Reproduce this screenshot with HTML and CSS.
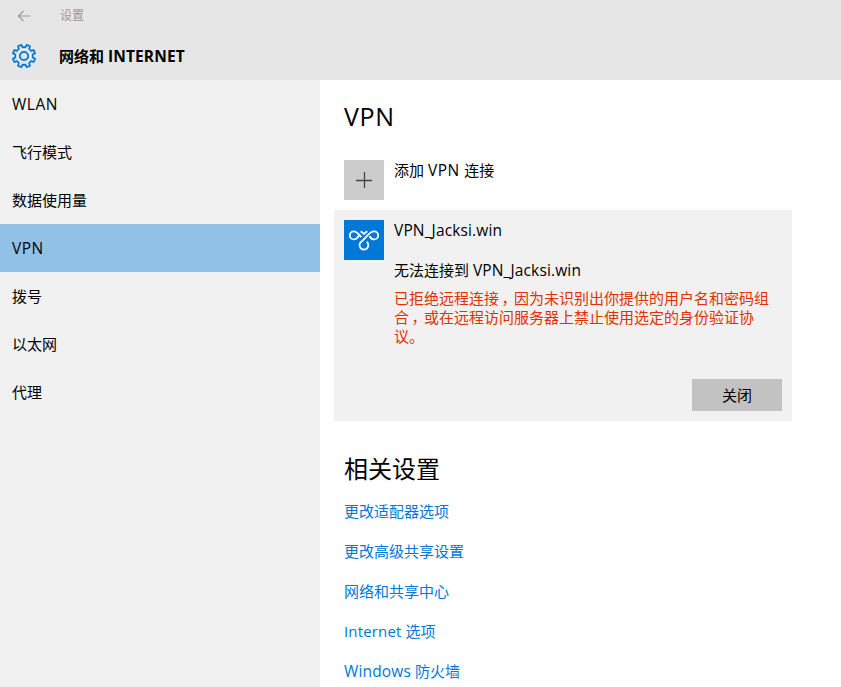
FILE: index.html
```html
<!DOCTYPE html>
<html lang="zh-CN">
<head>
<meta charset="utf-8">
<title>设置</title>
<link rel="stylesheet" href="styles.css">
</head>
<body>
<header class="header">
  <div class="titlebar">
    <svg class="back" viewBox="0 0 14 12" width="14" height="12"><path d="M13 6H1.5M6.5 1L1.5 6l5 5"/></svg>
    <span>设置</span>
  </div>
  <div class="heading">
    <svg class="gear" viewBox="-12 -12 24 24" width="24" height="24">
      <path d="M8.68 1.45L11.09 2.66L9.72 5.96L7.16 5.11Q6.3 6.3 5.11 7.16L5.96 9.72L2.66 11.09L1.45 8.68Q0 8.9-1.45 8.68L-2.66 11.09L-5.96 9.72L-5.11 7.16Q-6.3 6.3-7.16 5.11L-9.72 5.96L-11.09 2.66L-8.68 1.45Q-8.9 0-8.68-1.45L-11.09-2.66L-9.72-5.96L-7.16-5.11Q-6.3-6.3-5.11-7.16L-5.96-9.72L-2.66-11.09L-1.45-8.68Q0-8.9 1.45-8.68L2.66-11.09L5.96-9.72L5.11-7.16Q6.3-6.3 7.16-5.11L9.72-5.96L11.09-2.66L8.68-1.45Q8.9 0 8.68 1.45Z"/>
      <circle r="4.2"/>
    </svg>
    <h1>网络和 <span class="en">INTERNET</span></h1>
  </div>
</header>
<div class="body">
  <nav class="nav">
    <a class="caps">WLAN</a>
    <a>飞行模式</a>
    <a>数据使用量</a>
    <a class="active caps">VPN</a>
    <a>拨号</a>
    <a>以太网</a>
    <a>代理</a>
  </nav>
  <main class="main">
    <h2 class="title">VPN</h2>
    <div class="add">
      <svg class="tile plus" viewBox="0 0 40 40" width="40" height="40"><path d="M12 20.5h16M20.5 12v16"/></svg>
      <span>添加 <span class="caps">VPN </span>连接</span>
    </div>
    <section class="card">
      <svg class="tile vpn" viewBox="0 0 40 40" width="40" height="40">
        <path d="M14.8 15.8C13.6 18 12 19.4 9.8 19.4A4 4 0 0 1 9.8 11.4C13 11.4 14.6 14.4 17.4 17.2"/>
        <path d="M25.4 16C26.6 18.2 28 19.4 30.2 19.4A4 4 0 0 0 30.2 11.4C25 11.4 22.6 17.4 17.6 21.4A4.4 4.4 0 1 0 22.8 21.8"/>
        <path d="M16.6 11.2L20 13.8L23.2 11.2"/>
      </svg>
      <div class="info">
        <div class="name en">VPN_Jacksi.win</div>
        <div class="status">无法连接到 <span class="en">VPN_Jacksi.win</span></div>
        <p class="error">已拒绝远程连接<span class="comma">，</span>因为未识别出你提供的用户名和密码组合<span class="comma">，</span>或在远程访问服务器上禁止使用选定的身份验证协议。</p>
        <button class="close">关闭</button>
      </div>
    </section>
    <h2 class="related">相关设置</h2>
    <div class="links">
      <a>更改适配器选项</a>
      <a>更改高级共享设置</a>
      <a>网络和共享中心</a>
      <a><span class="en-tight">Internet </span>选项</a>
      <a><span class="en">Windows </span>防火墙</a>
    </div>
  </main>
</div>
</body>
</html>
```
FILE: styles.css
```css
* { box-sizing: border-box; }
body {
  margin: 0;
  height: 687px;
  overflow: hidden;
  display: flex;
  flex-direction: column;
  background: #fff;
  color: #000;
  font: 15px/20px "Open Sans", "Noto Sans CJK SC", sans-serif;
}
h1, h2, p { margin: 0; font-weight: 400; }
svg { display: block; fill: none; flex: none; }
.en { font-size: 15.5px; letter-spacing: .14px; }
.caps { font-size: 15.5px; letter-spacing: .5px; }
.en-tight { letter-spacing: .15px; }
.header { height: 80px; background: #e6e6e6; }
.titlebar {
  display: flex;
  align-items: center;
  height: 32px;
  padding-left: 17px;
  gap: 29px;
  font-size: 12px;
  color: #999;
}
.back { stroke: #999; stroke-width: 1.2; }
.heading {
  display: flex;
  align-items: center;
  height: 48px;
  padding-left: 12px;
  gap: 23px;
}
.gear { stroke: #0078d7; stroke-width: 1.7; overflow: visible; }
.heading h1 { font-size: 15px; font-weight: 700; }
.body { flex: 1; display: flex; min-height: 0; }
.nav { width: 320px; background: #f1f1f1; }
.nav a {
  display: flex;
  align-items: center;
  height: 48px;
  padding-left: 12px;
}
.nav .active { background: #91c1e7; }
.main { width: 472px; padding: 20px 0 0 14px; }
.main h2 { padding-left: 10px; font-size: 24px; line-height: 32px; }
.main .title { font-size: 25px; letter-spacing: .7px; }
.add { display: flex; gap: 10px; padding: 28px 10px 10px; }
.plus { background: #ccc; stroke: #444; stroke-width: 1.3; }
.card {
  display: flex;
  gap: 10px;
  height: 211px;
  padding: 10px;
  background: #f1f1f1;
}
.vpn { background: #0078d7; stroke: #fff; stroke-width: 1.8; }
.info { flex: 1; display: flex; flex-direction: column; }
.status { margin-top: 20px; }
.error { width: 380px; margin-top: 9px; line-height: 19px; color: #e03100; }
.comma { padding-left: 2.5px; margin-right: -2.5px; }
.close {
  width: 90px;
  height: 32px;
  margin: auto 0 0 auto;
  padding: 0;
  border: 0;
  background: #c2c2c2;
  font: inherit;
  color: #000;
}
.main .related { margin-top: 32px; }
.links { display: flex; flex-direction: column; gap: 20px; padding: 16px 10px 0; color: #0078d7; }
```
